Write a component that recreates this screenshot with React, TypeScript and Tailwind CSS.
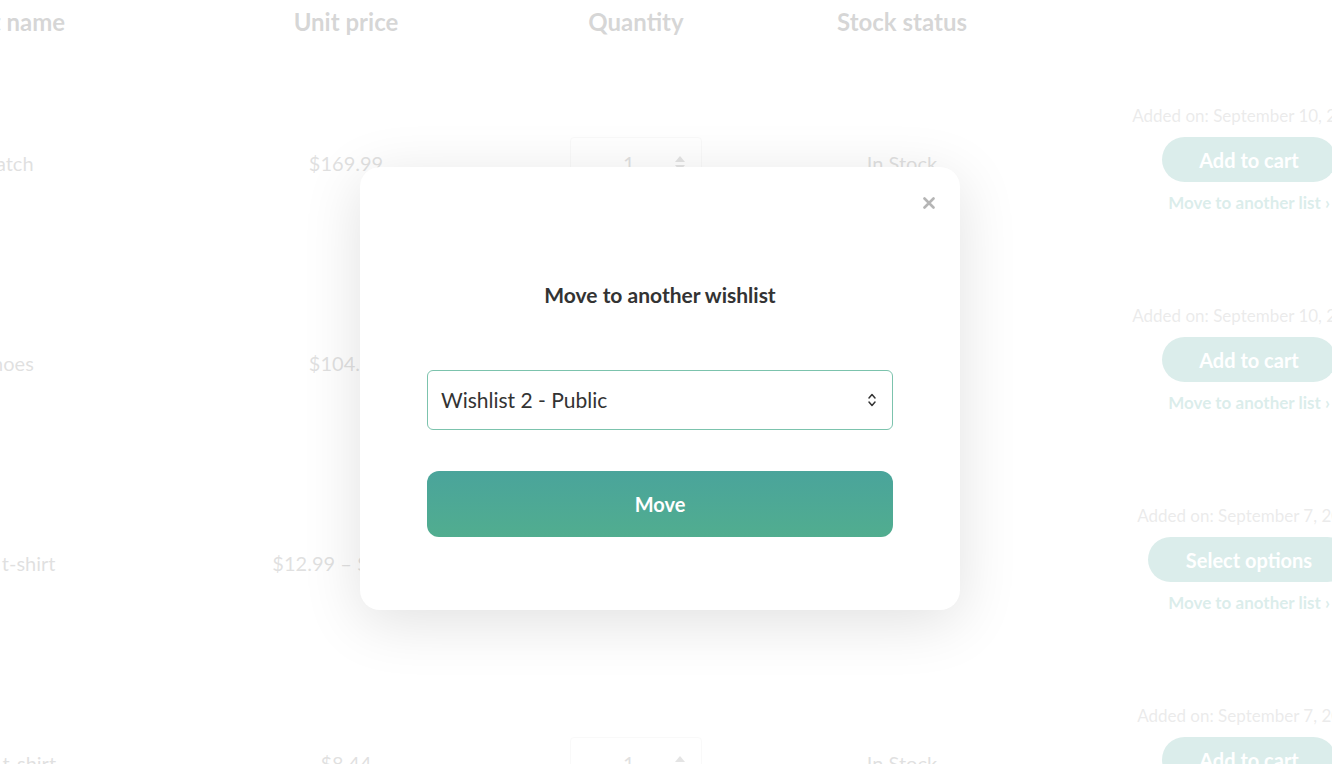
import React from 'react';

interface Row {
  name: string;
  price: string;
  added: string;
  action: string;
  wide?: boolean;
}

const rows: Row[] = [
  { name: 'Smart Watch', price: '$169.99', added: 'Added on: September 10, 2024', action: 'Add to cart' },
  { name: 'Sports Shoes', price: '$104.99', added: 'Added on: September 10, 2024', action: 'Add to cart' },
  { name: 'Oversize t-shirt', price: '$12.99 – $15.99', added: 'Added on: September 7, 2024', action: 'Select options', wide: true },
  { name: 'Essential t-shirt', price: '$8.44', added: 'Added on: September 7, 2024', action: 'Add to cart' },
];

const QtyBox: React.FC = () => (
  <div className="w-[132px] h-[53px] border border-[#e2e2e2] rounded-[4px] flex items-center justify-between pl-[52px] pr-[16px]">
    <span className="text-[20px] text-[#666]">1</span>
    <div className="flex flex-col gap-[3px]">
      <svg width="10" height="6" viewBox="0 0 10 6"><path d="M0 6 L5 0 L10 6 Z" fill="#777" /></svg>
      <svg width="10" height="6" viewBox="0 0 10 6"><path d="M0 0 L5 6 L10 0 Z" fill="#777" /></svg>
    </div>
  </div>
);

const App: React.FC = () => {
  return (
    <div className="relative w-[1332px] h-[764px] overflow-hidden bg-white font-['Lato',sans-serif]">
      {/* Wishlist table behind the modal */}
      <div className="ml-[-80px] w-[1574px]">
        <div className="grid grid-cols-[300px_252px_328px_204px_490px] h-[44px] items-center text-[24px] font-bold text-[#333]">
          <div className="ml-[-4px]">Product name</div>
          <div className="text-center">Unit price</div>
          <div className="text-center">Quantity</div>
          <div className="text-center">Stock status</div>
          <div></div>
        </div>
        <div className="mt-[19px]">
          {rows.map((r) => (
            <div key={r.name} className="grid grid-cols-[300px_252px_328px_204px_490px] h-[200px] items-center text-[20px] text-[#666]">
              <div>{r.name}</div>
              <div className="text-center">{r.price}</div>
              <div className="flex justify-center"><QtyBox /></div>
              <div className="text-center">In Stock</div>
              <div className="flex flex-col items-center mb-[7px]">
                <div className="text-[17px] leading-[24px] text-[#999] w-[260px] text-center">{r.added}</div>
                <button className={`mt-[9px] h-[45px] rounded-full bg-[#4aa399] text-white font-bold text-[20px] ${r.wide ? 'w-[202px]' : 'w-[174px]'}`}>
                  {r.action}
                </button>
                <div className="mt-[9px] text-[17px] leading-[24px] font-bold text-[#4aa399]">Move to another list ›</div>
              </div>
            </div>
          ))}
        </div>
      </div>

      {/* Fade overlay */}
      <div className="absolute inset-0 bg-white/[0.8]"></div>

      {/* Modal */}
      <div className="absolute left-[360px] top-[167px] w-[600px] h-[443px] bg-white rounded-[20px] shadow-[0_12px_60px_rgba(0,0,0,0.12)] flex flex-col items-center pt-[114px]">
        <button className="absolute right-[22px] top-[27px] w-[18px] h-[18px] flex items-center justify-center">
          <svg width="12" height="12" viewBox="0 0 12 12">
            <path d="M1.5 1.5 L10.5 10.5 M10.5 1.5 L1.5 10.5" stroke="#b5b5b5" strokeWidth="2.6" strokeLinecap="round" />
          </svg>
        </button>
        <h2 className="text-[21px] leading-[28px] font-bold text-[#333]">Move to another wishlist</h2>
        <div className="mt-[61px] w-[466px] h-[60px] border-[1.5px] border-[#7cc3ad] rounded-[6px] flex items-center justify-between pl-[13px] pr-[15px]">
          <span className="text-[21px] text-[#333]">Wishlist 2 - Public</span>
          <svg width="10" height="16" viewBox="0 0 10 16" fill="none">
            <path d="M2 6 L5 2.5 L8 6 M2 10 L5 13.5 L8 10" stroke="#333" strokeWidth="1.5" strokeLinecap="round" strokeLinejoin="round" />
          </svg>
        </div>
        <button className="mt-[41px] w-[466px] h-[66px] rounded-[12px] bg-linear-to-b from-[#4aa49b] to-[#51ad8f] text-white font-bold text-[20px]">
          Move
        </button>
      </div>
    </div>
  );
};

export default App;
